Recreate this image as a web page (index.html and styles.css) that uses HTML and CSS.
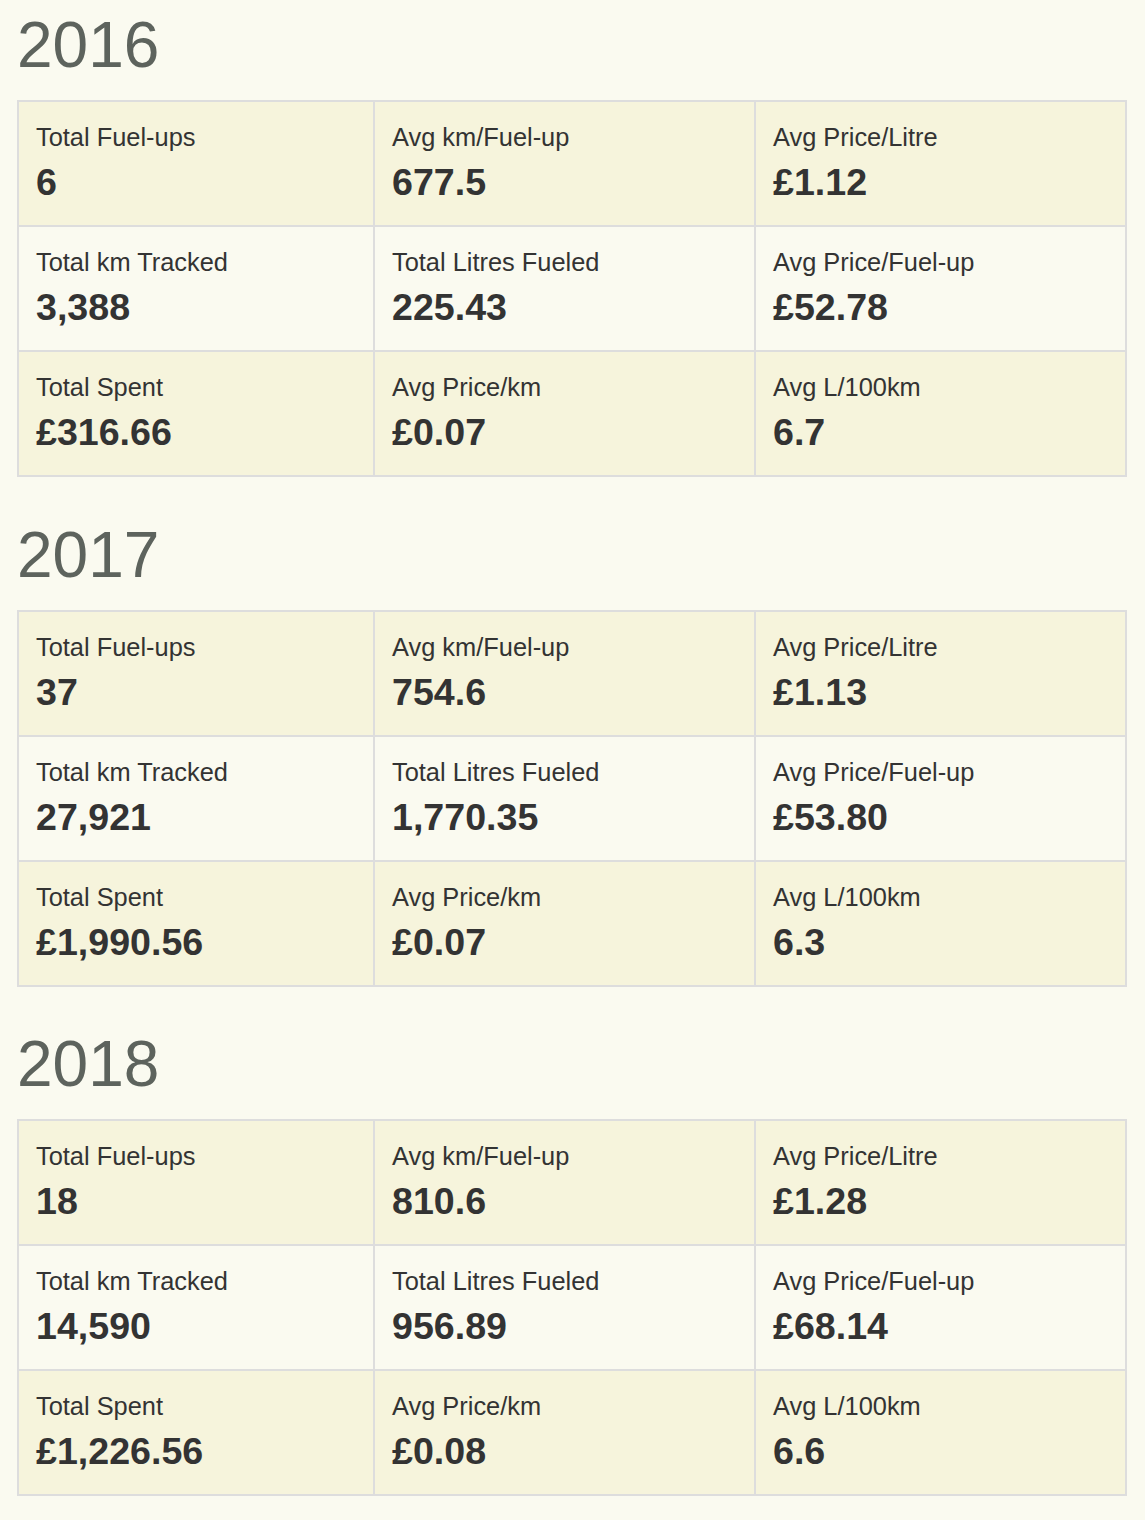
FILE: index.html
```html
<!DOCTYPE html>
<html lang="en">
<head>
<meta charset="utf-8">
<title>Fuel statistics</title>
<link rel="stylesheet" href="styles.css">
</head>
<body>
<main class="page">
  <section class="year">
    <h1 class="year-title">2016</h1>
    <div class="stats">
      <div class="cell shaded"><div class="label">Total Fuel-ups</div><div class="value">6</div></div>
      <div class="cell shaded"><div class="label">Avg km/Fuel-up</div><div class="value">677.5</div></div>
      <div class="cell shaded"><div class="label">Avg Price/Litre</div><div class="value">£1.12</div></div>
      <div class="cell"><div class="label">Total km Tracked</div><div class="value">3,388</div></div>
      <div class="cell"><div class="label">Total Litres Fueled</div><div class="value">225.43</div></div>
      <div class="cell"><div class="label">Avg Price/Fuel-up</div><div class="value">£52.78</div></div>
      <div class="cell shaded"><div class="label">Total Spent</div><div class="value">£316.66</div></div>
      <div class="cell shaded"><div class="label">Avg Price/km</div><div class="value">£0.07</div></div>
      <div class="cell shaded"><div class="label">Avg L/100km</div><div class="value">6.7</div></div>
    </div>
  </section>
  <section class="year">
    <h1 class="year-title">2017</h1>
    <div class="stats">
      <div class="cell shaded"><div class="label">Total Fuel-ups</div><div class="value">37</div></div>
      <div class="cell shaded"><div class="label">Avg km/Fuel-up</div><div class="value">754.6</div></div>
      <div class="cell shaded"><div class="label">Avg Price/Litre</div><div class="value">£1.13</div></div>
      <div class="cell"><div class="label">Total km Tracked</div><div class="value">27,921</div></div>
      <div class="cell"><div class="label">Total Litres Fueled</div><div class="value">1,770.35</div></div>
      <div class="cell"><div class="label">Avg Price/Fuel-up</div><div class="value">£53.80</div></div>
      <div class="cell shaded"><div class="label">Total Spent</div><div class="value">£1,990.56</div></div>
      <div class="cell shaded"><div class="label">Avg Price/km</div><div class="value">£0.07</div></div>
      <div class="cell shaded"><div class="label">Avg L/100km</div><div class="value">6.3</div></div>
    </div>
  </section>
  <section class="year">
    <h1 class="year-title">2018</h1>
    <div class="stats">
      <div class="cell shaded"><div class="label">Total Fuel-ups</div><div class="value">18</div></div>
      <div class="cell shaded"><div class="label">Avg km/Fuel-up</div><div class="value">810.6</div></div>
      <div class="cell shaded"><div class="label">Avg Price/Litre</div><div class="value">£1.28</div></div>
      <div class="cell"><div class="label">Total km Tracked</div><div class="value">14,590</div></div>
      <div class="cell"><div class="label">Total Litres Fueled</div><div class="value">956.89</div></div>
      <div class="cell"><div class="label">Avg Price/Fuel-up</div><div class="value">£68.14</div></div>
      <div class="cell shaded"><div class="label">Total Spent</div><div class="value">£1,226.56</div></div>
      <div class="cell shaded"><div class="label">Avg Price/km</div><div class="value">£0.08</div></div>
      <div class="cell shaded"><div class="label">Avg L/100km</div><div class="value">6.6</div></div>
    </div>
  </section>
</main>
</body>
</html>
```

FILE: styles.css
```css
html, body {
  margin: 0;
  padding: 0;
  background: #fafaf0;
}

body {
  font-family: "Liberation Sans", Arial, sans-serif;
  color: #333;
}

.page {
  padding: 11px 18px 0 17px;
}

.year {
  margin-bottom: 43.5px;
}

.year-title {
  margin: 0 0 20px 0;
  font-size: 64px;
  line-height: 69px;
  font-weight: normal;
  color: #5d635d;
}

.stats {
  display: grid;
  grid-template-columns: 356px 381px 371px;
  width: 1108px;
  border-top: 2px solid #dddddd;
  border-left: 2px solid #dddddd;
}

.cell {
  box-sizing: content-box;
  height: 106px;
  padding: 17px 17px 0 17px;
  border-right: 2px solid #dddddd;
  border-bottom: 2px solid #dddddd;
}

.cell.shaded {
  background: #f6f4dc;
}

.label {
  font-size: 25.4px;
  line-height: 36px;
}

.value {
  margin-top: 7px;
  font-size: 37.6px;
  line-height: 41px;
  font-weight: bold;
}
```
